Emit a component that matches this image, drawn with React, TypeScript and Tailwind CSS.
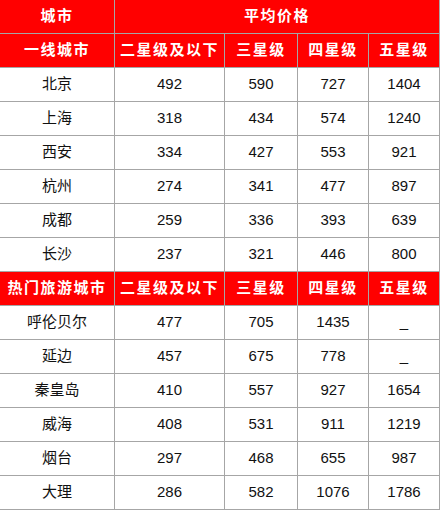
const font = {
  fontFamily: '"Liberation Sans", "Noto Sans CJK SC", sans-serif',
};

type Row = { city: string; prices: string[] };

const tier1: Row[] = [
  { city: '北京', prices: ['492', '590', '727', '1404'] },
  { city: '上海', prices: ['318', '434', '574', '1240'] },
  { city: '西安', prices: ['334', '427', '553', '921'] },
  { city: '杭州', prices: ['274', '341', '477', '897'] },
  { city: '成都', prices: ['259', '336', '393', '639'] },
  { city: '长沙', prices: ['237', '321', '446', '800'] },
];

const tourist: Row[] = [
  { city: '呼伦贝尔', prices: ['477', '705', '1435', '_'] },
  { city: '延边', prices: ['457', '675', '778', '_'] },
  { city: '秦皇岛', prices: ['410', '557', '927', '1654'] },
  { city: '威海', prices: ['408', '531', '911', '1219'] },
  { city: '烟台', prices: ['297', '468', '655', '987'] },
  { city: '大理', prices: ['286', '582', '1076', '1786'] },
];

const levels = ['二星级及以下', '三星级', '四星级', '五星级'];

const cell = 'h-[34px] flex items-center justify-center border-r border-b border-[#a6a6a6]';
const head = `${cell} bg-[#ff0000] text-white font-bold text-[15px] tracking-[1.5px]`;
const body = `${cell} bg-white text-[#111] text-[15px]`;

function Section({ title, rows }: { title: string; rows: Row[] }) {
  return (
    <>
      <div className={head}>{title}</div>
      {levels.map((l) => (
        <div key={l} className={head}>{l}</div>
      ))}
      {rows.map((r) => (
        <div key={r.city} className="contents">
          <div className={body}>{r.city}</div>
          {r.prices.map((p, i) => (
            <div key={i} className={body}>{p}</div>
          ))}
        </div>
      ))}
    </>
  );
}

export default function App() {
  return (
    <div className="w-[441px] h-[511px] bg-white" style={font}>
      <div className="grid w-[440px] grid-cols-[115px_110px_73px_71px_71px]">
        <div className={head}>城市</div>
        <div className={`${head} col-span-4`}>平均价格</div>
        <Section title="一线城市" rows={tier1} />
        <Section title="热门旅游城市" rows={tourist} />
      </div>
    </div>
  );
}
